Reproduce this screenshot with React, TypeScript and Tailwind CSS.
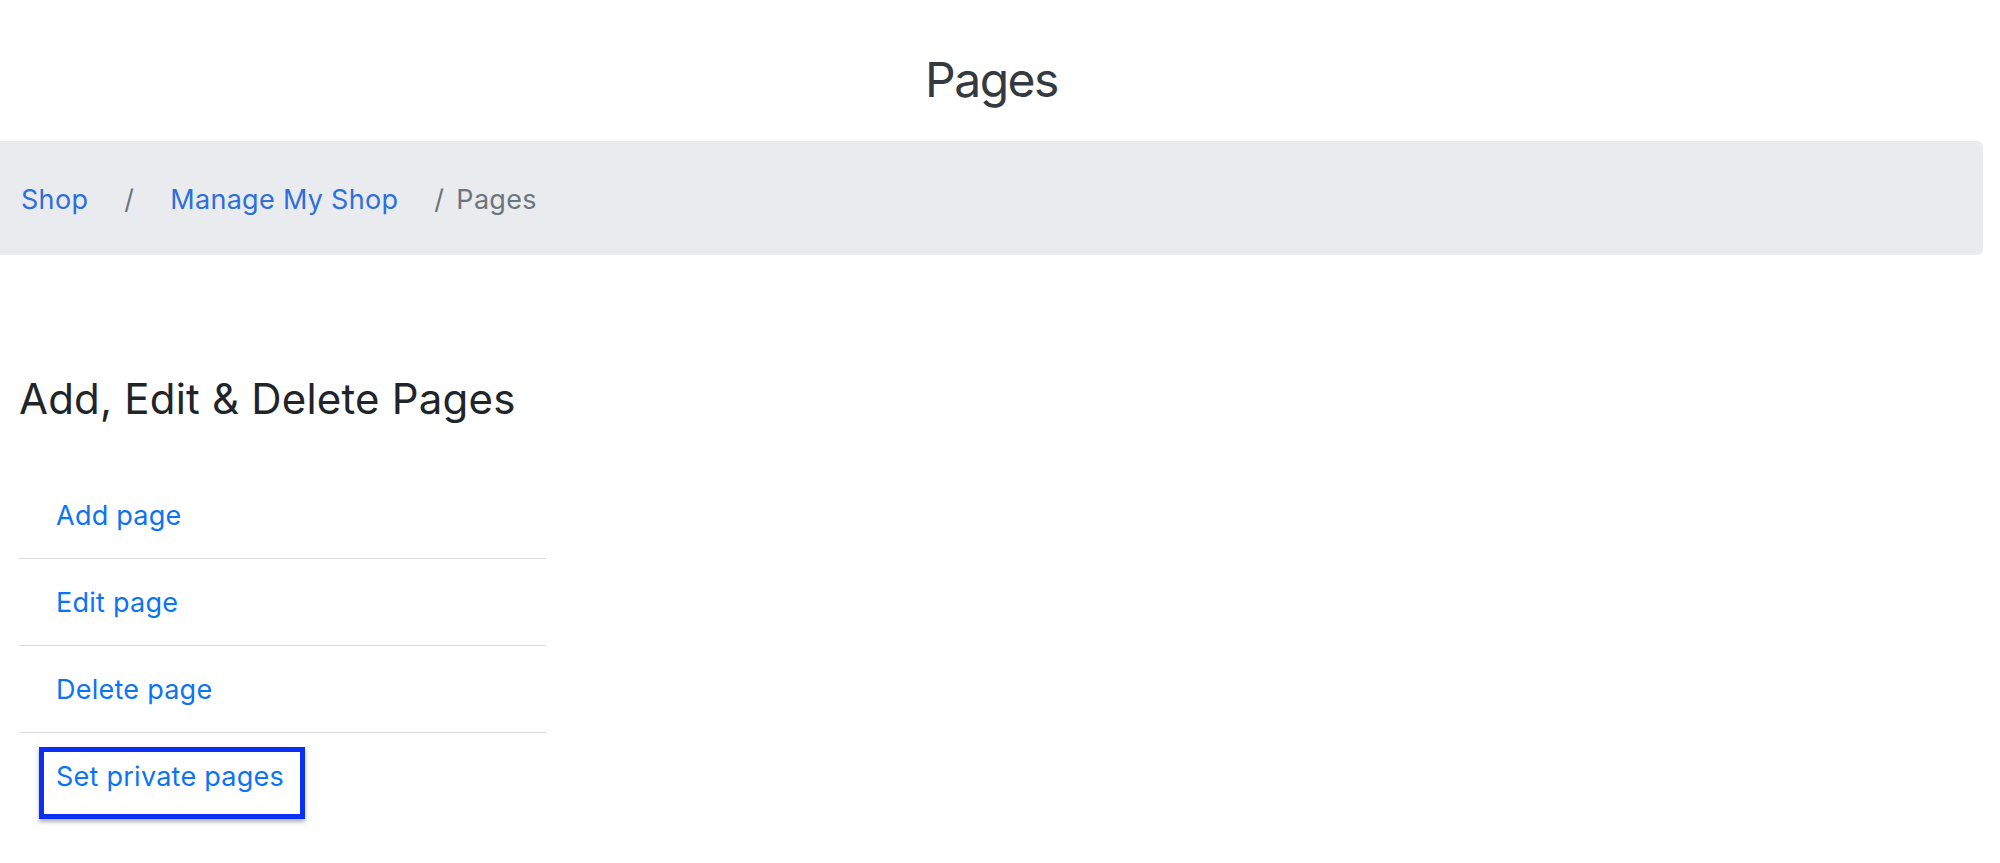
const items = ["Add page", "Edit page", "Delete page", "Set private pages"];

export default function App() {
  return (
    <div className="min-h-[863px] w-[1983px] bg-white font-['Inter',sans-serif]">
      <h1 className="pt-[51px] pb-[32px] text-center text-[48px] leading-[1.2] tracking-[-1.5px] text-[#343a40]">
        Pages
      </h1>

      <nav className="flex h-[114px] items-center rounded-r-md bg-[#e9ebef] pl-[21px] pt-[5px] text-[27px] tracking-[0.3px]">
        <a href="#" className="text-[#2d6fdc]">
          Shop
        </a>
        <span className="px-[36px] text-[#6c757d]">/</span>
        <a href="#" className="text-[#2d6fdc]">
          Manage My Shop
        </a>
        <span className="pl-[36px] pr-[12px] text-[#6c757d]">/</span>
        <span className="text-[#6c757d]">Pages</span>
      </nav>

      <div className="pl-[19px] pt-[119px]">
        <h2 className="text-[42px] leading-[1.2] tracking-[0.2px] text-[#212529]">
          Add, Edit &amp; Delete Pages
        </h2>

        <ul className="mt-[48px] w-[527px]">
          {items.map((label, i) => (
            <li
              key={label}
              className={
                i < items.length - 1
                  ? "border-b border-[#dcdcdc] pl-[20px] pt-[14px]"
                  : "pl-[20px] pt-[14px]"
              }
            >
              <a
                href="#"
                className={
                  i === items.length - 1
                    ? "inline-block h-[72px] border-[5px] border-[#0b2ff7] pl-[12px] pr-[16px] pt-[7px] text-[27px] leading-[36px] tracking-[0.25px] text-[#0a74f5] shadow-[0_3px_4px_rgba(0,0,0,0.3)]"
                    : "inline-block h-[72px] border-[5px] border-transparent pl-[12px] pr-[16px] pt-[7px] text-[27px] leading-[36px] tracking-[0.25px] text-[#0a74f5]"
                }
              >
                {label}
              </a>
            </li>
          ))}
        </ul>
      </div>
    </div>
  );
}
